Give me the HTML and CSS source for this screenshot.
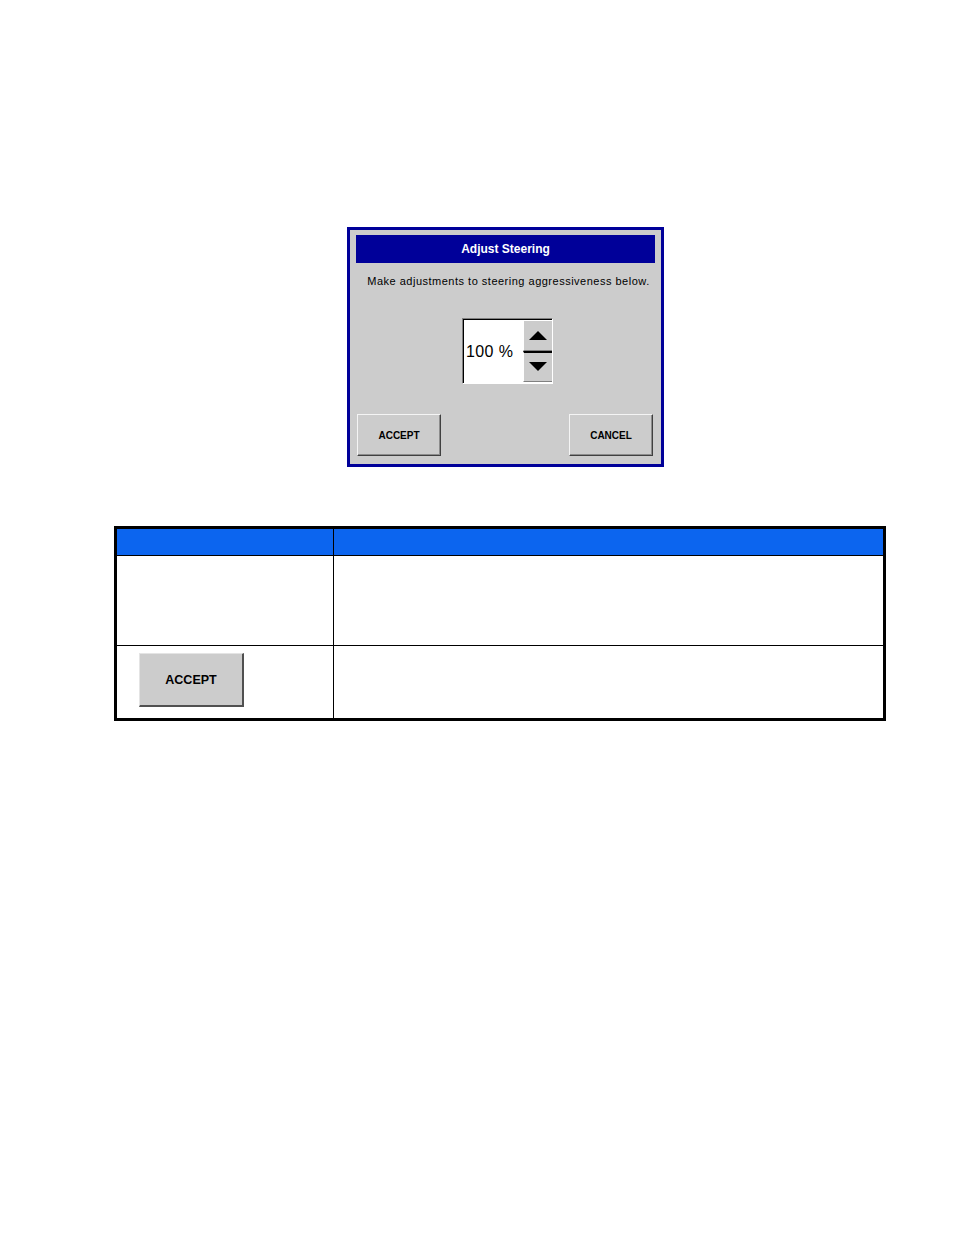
FILE: index.html
```html
<!DOCTYPE html>
<html lang="en">
<head>
    <meta charset="UTF-8">
    <meta name="viewport" content="width=device-width, initial-scale=1.0">
    <title>Adjust Steering</title>
    <link rel="stylesheet" href="styles.css">
</head>
<body>
    <div class="dialog">
        <div class="dialog-title">Adjust Steering</div>
        <p class="dialog-message">Make adjustments to steering aggressiveness below.</p>

        <div class="spin-row">
            <div class="spin-box">
                <div class="spin-value">100 %</div>
                <div class="spin-buttons">
                    <div class="spin-btn">
                        <div class="arrow-up"></div>
                    </div>
                    <div class="spin-btn spin-btn-down">
                        <div class="arrow-down"></div>
                    </div>
                </div>
            </div>
        </div>

        <div class="dialog-buttons">
            <div class="ui-button">ACCEPT</div>
            <div class="ui-button">CANCEL</div>
        </div>
    </div>

    <div class="spec-table">
        <div class="cell head first"></div>
        <div class="cell head"></div>

        <div class="cell row-tall first"></div>
        <div class="cell row-tall"></div>

        <div class="cell row-short first last">
            <div class="ui-button big">ACCEPT</div>
        </div>
        <div class="cell row-short last"></div>
    </div>
</body>
</html>
```

FILE: styles.css
```css
body {
    margin: 0;
    background-color: #fff;
    font-family: "Liberation Sans", Arial, sans-serif;
}

/* Dialog screen */
.dialog {
    width: 317px;
    margin: 227px 0 0 347px;
    box-sizing: border-box;
    border: 3px solid #000099;
    background-color: #cccccc;
    padding: 5px 6px 8px 6px;
}

.dialog-title {
    height: 28px;
    line-height: 28px;
    background-color: #000099;
    color: #fff;
    font-size: 12px;
    font-weight: bold;
    text-align: center;
}

.dialog-message {
    margin: 11px 0 0;
    padding-left: 6px;
    height: 14px;
    line-height: 14px;
    font-size: 11px;
    letter-spacing: 0.5px;
    text-align: center;
    color: #000;
}

.spin-row {
    display: flex;
    justify-content: center;
    margin-top: 30px;
    padding-left: 4px;
}

.spin-box {
    display: flex;
    width: 91px;
    height: 66px;
    box-sizing: border-box;
    border: 1px solid;
    border-color: #808080 #fff #fff #808080;
    box-shadow: inset 1px 1px 0 #000;
    background-color: #fff;
}

.spin-value {
    flex: 1;
    display: flex;
    align-items: center;
    padding: 2px 0 0 3px;
    font-size: 16px;
    letter-spacing: 0.4px;
    color: #000;
}

.spin-buttons {
    width: 29px;
    display: flex;
    flex-direction: column;
    padding: 1px 0;
}

.spin-btn {
    flex: 1;
    display: flex;
    align-items: center;
    justify-content: center;
    background-color: #cccccc;
    border-top: 1px solid #fff;
    border-left: 1px solid #fff;
    border-bottom: 1px solid #808080;
}

.spin-btn-down {
    border-top: 2px solid #000;
}

.arrow-up {
    width: 0;
    height: 0;
    border-left: 9px solid transparent;
    border-right: 9px solid transparent;
    border-bottom: 9px solid #000;
}

.arrow-down {
    width: 0;
    height: 0;
    border-left: 9px solid transparent;
    border-right: 9px solid transparent;
    border-top: 9px solid #000;
}

.dialog-buttons {
    display: flex;
    justify-content: space-between;
    margin: 30px 2px 0 1px;
}

.ui-button {
    width: 84px;
    height: 42px;
    box-sizing: border-box;
    display: flex;
    align-items: center;
    justify-content: center;
    background-color: #cccccc;
    border-top: 1px solid #f4f4f4;
    border-left: 1px solid #f4f4f4;
    border-right: 1px solid #404040;
    border-bottom: 1px solid #404040;
    box-shadow: inset -1px -1px 0 #8c8c8c;
    font-size: 10px;
    font-weight: bold;
    color: #000;
}

.ui-button.big {
    width: 105px;
    height: 54px;
    font-size: 12.5px;
    border-top-color: #e4e4e4;
    border-left-color: #e4e4e4;
    border-right: 2px solid #505050;
    border-bottom: 2px solid #505050;
    box-shadow: none;
}

/* Reference table */
.spec-table {
    width: 772px;
    margin: 59px 0 0 114px;
    box-sizing: border-box;
    border: 3px solid #000;
    display: grid;
    grid-template-columns: 217px 1fr;
}

.cell {
    border-bottom: 1px solid #000;
}

.cell.first {
    border-right: 1px solid #000;
}

.cell.last {
    border-bottom: none;
}

.head {
    height: 26px;
    background-color: #0c65ef;
}

.row-tall {
    height: 89px;
}

.row-short {
    height: 72px;
}

.row-short.first {
    box-sizing: border-box;
    padding: 7px 0 0 22px;
}
```
